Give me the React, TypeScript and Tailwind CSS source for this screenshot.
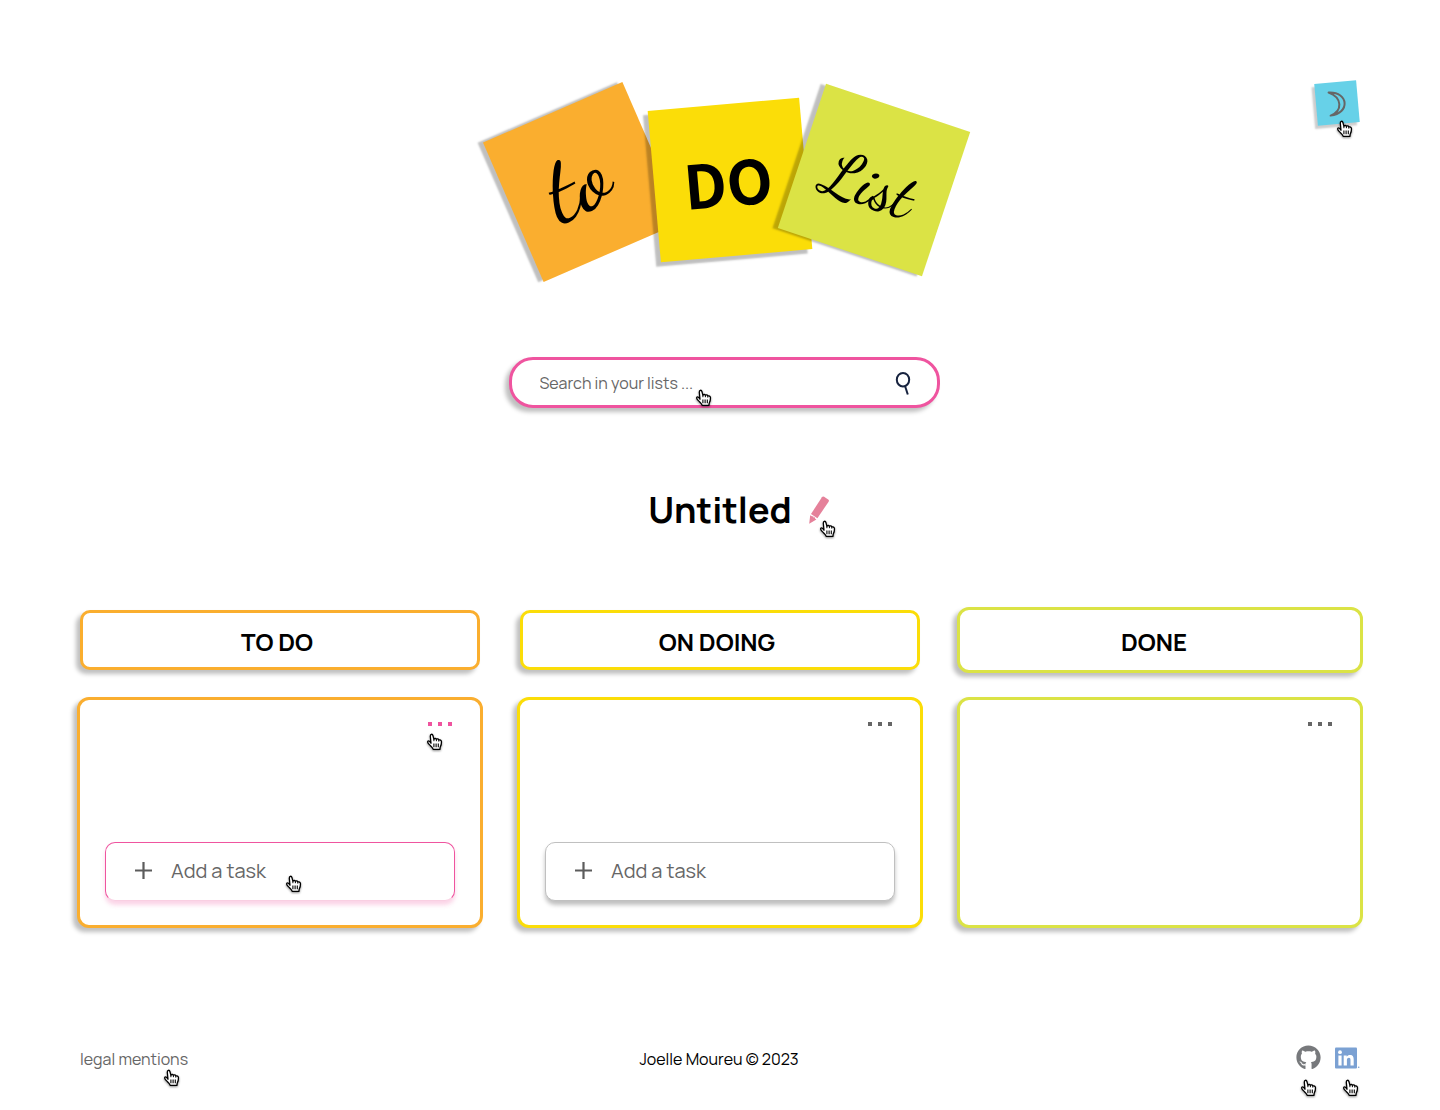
import React from "react";
import { FaGithub } from "react-icons/fa";

function Hand({ className }: { className: string }) {
  return (
    <svg
      aria-hidden="true"
      viewBox="0 0 17 18"
      className={`pointer-events-none absolute h-[18px] w-[17px] drop-shadow-[0_1px_1px_rgba(0,0,0,0.45)] ${className}`}
    >
      <path
        d="M5 10.2 4.3 3.2C4.2 1 6.4.6 6.9 2.5L7.9 6.2C8.6 5.2 10 5.3 10.4 6.3 11.2 5.6 12.5 5.9 12.8 7 14 6.4 15.4 7.3 15.5 8.7 15.6 11.2 15.2 12.2 14.2 14.2L13.9 16.3H7.2C6.7 14.6 5 13.3 3.6 11.9 2.3 10.6 1.2 9.3 1.8 8.3 2.7 7.3 4 8.6 5 10.2Z"
        fill="#fff"
        stroke="#000"
        strokeWidth="1.3"
        strokeLinejoin="round"
      />
      <path d="M7.9 10.6V14.2M10.1 10.6V14.2M12.3 10.6V14.2" stroke="#000" strokeWidth="1.1" />
      <path d="M7.9 6V8.2M10.4 6.4V8.2M12.8 7.2V8.6" stroke="#000" strokeWidth="1" />
    </svg>
  );
}

function Logo() {
  return (
    <h1 className="flex items-center pl-[17px] text-black" aria-label="to DO List">
      <span className="mt-1 flex size-[152px] rotate-[-23.5deg] items-center justify-center bg-[#faae2f] pr-3 pb-1.5 font-['Dancing_Script','Liberation_Serif',serif] text-[96px] leading-none font-medium shadow-[-5px_-2px_2px_rgba(0,0,0,0.25)]">
        to
      </span>
      <span className="-ml-[5px] flex size-[152px] -rotate-5 items-center justify-center bg-[#fbdd08] pr-1 font-['Noto_Sans_CJK_JP',Roboto,sans-serif] text-[60px] leading-none font-bold shadow-[-5px_4px_2px_rgba(0,0,0,0.25)]">
        DO
      </span>
      <span className="-ml-2 flex size-[152px] rotate-[18.5deg] items-center justify-center bg-[#dbe345] pt-3 pr-1.5 font-['Dancing_Script','Liberation_Serif',serif] text-[64px] leading-none font-medium shadow-[-5px_2px_2px_rgba(0,0,0,0.25)]">
        List
      </span>
    </h1>
  );
}

type ColumnProps = {
  title: string;
  border: string;
  large?: boolean;
  active?: boolean;
  task?: boolean;
};

function Column({ title, border, large, active, task }: ColumnProps) {
  return (
    <section className="flex flex-col gap-[30px]">
      <h3
        className={`flex items-center justify-center border-[3px] bg-white pt-1 text-2xl font-bold text-black shadow-[-4px_4px_4px_rgba(0,0,0,0.25)] ${border} ${
          large ? "-m-[3px] h-[66px] rounded-xl pr-3" : "h-[60px] rounded-[10px] pr-1.5"
        }`}
      >
        {title}
      </h3>
      <div className={`-m-[3px] flex h-[231px] flex-col justify-between rounded-xl border-[3px] bg-white px-[25px] pt-[25px] pb-6 shadow-[-4px_4px_4px_rgba(0,0,0,0.25)] ${border}`}>
        <div className="relative -mt-1 self-end">
          <button type="button" aria-label={`${title} options`} className={`flex gap-[6px] px-[3px] pt-px ${active ? "text-[#ef549f]" : "text-[#666]"}`}>
            <span className="size-1 bg-current" />
            <span className="size-1 bg-current" />
            <span className="size-1 bg-current" />
          </button>
          {active && <Hand className="top-3 left-px" />}
        </div>
        {task && (
          <button
            type="button"
            className={`relative flex h-[59px] items-center gap-[19px] rounded-[10px] border bg-white px-[29px] pb-0.5 text-left text-xl font-normal text-[#666] ${
              active
                ? "border-[#ef549f] border-b-[#f9cfe2] shadow-[0_4px_4px_rgba(239,84,159,0.25)]"
                : "border-[#c0c0c0] shadow-[0_4px_4px_rgba(0,0,0,0.25)]"
            }`}
          >
            <svg viewBox="0 0 17 17" className="size-[17px]" aria-hidden="true">
              <path d="M8.5 0V17M0 8.5H17" stroke="#5c5c5c" strokeWidth="2.2" />
            </svg>
            Add a task
            {active && <Hand className="top-8 left-[179px]" />}
          </button>
        )}
      </div>
    </section>
  );
}

export default function App() {
  return (
    <div className="min-h-screen bg-white px-20 pt-20 font-[Manrope,Inter,sans-serif]">
      <header className="grid grid-cols-[1fr_auto_1fr] items-start">
        <div />
        <div className="pt-[22px]">
          <Logo />
        </div>
        <div className="relative mt-[2px] mr-0.5 justify-self-end">
          <button
            type="button"
            aria-label="Dark mode"
            className="flex size-[42px] -rotate-5 items-center justify-center bg-[#67d1e8] pt-0.5 pr-0.5 shadow-[-3px_3px_2px_rgba(0,0,0,0.2)]"
          >
            <svg viewBox="0 0 20 26" className="h-[26px] w-5 rotate-5" fill="none" stroke="#666" strokeWidth="2" strokeLinejoin="round" aria-hidden="true">
              <path d="M2.5 1.5C23 .5 24 22.5 4.5 24.5 16.5 20 16.5 6.5 2.5 1.5Z" />
            </svg>
          </button>
          <Hand className="top-[38px] left-[20px]" />
        </div>
      </header>

      <main>
        <form role="search" className="relative mx-auto mt-[99px] w-[431px] translate-x-1" onSubmit={(e) => e.preventDefault()}>
          <input
            type="search"
            aria-label="Search in your lists"
            placeholder="Search in your lists ..."
            className="block h-[51px] w-full rounded-3xl border-[3px] border-[#ef549f] bg-white pr-14 pl-7 text-base font-normal text-[#666] shadow-[-4px_4px_4px_rgba(0,0,0,0.25)] outline-none placeholder:text-[#666]"
          />
          <button type="submit" aria-label="Search" className="absolute top-3.5 right-7">
            <svg viewBox="0 0 18 24" className="h-6 w-[18px]" fill="none" stroke="#17233f" strokeWidth="2" aria-hidden="true">
              <ellipse cx="9" cy="8.7" rx="6.2" ry="6.8" />
              <path d="M11.2 15.5 13.8 23.5" />
            </svg>
          </button>
          <Hand className="top-8 left-[186px]" />
        </form>

        <div className="mt-[77px] flex h-[50px] items-center justify-center gap-4 pl-[38px]">
          <h2 className="text-[36px] leading-[50px] font-bold text-black">Untitled</h2>
          <div className="relative">
            <button type="button" aria-label="Rename list" className="block">
              <svg viewBox="0 0 22 28" className="h-7 w-[22px]" fill="#e5819a" aria-hidden="true">
                <path d="M13.9 1.2Q14.8 0 16.1 .8L20.2 3.6Q21.4 4.5 20.6 5.7L9.4 22.2 3 18Z" />
                <path d="M2.2 19.2 4.3 20.6 5.1 20.1 5.5 21.6 6.8 21.3 7.2 22.8 8.4 23.4 1.2 27.8Z" />
              </svg>
            </button>
            <Hand className="top-6 left-[11px]" />
          </div>
        </div>

        <div className="mt-[75px] grid grid-cols-3 gap-10">
          <Column title="TO DO" border="border-[#faae2f]" active task />
          <Column title="ON DOING" border="border-[#fbdd08]" task />
          <Column title="DONE" border="border-[#dbe345]" large />
        </div>
      </main>

      <footer className="mt-[120px] grid grid-cols-[1fr_auto_1fr] items-center pb-9 text-base">
        <div className="relative justify-self-start">
          <a href="#legal" className="font-normal text-[#666]">legal mentions</a>
          <Hand className="top-[22px] left-[83px]" />
        </div>
        <p className="pr-0.5 text-black">Joelle Moureu © 2023</p>
        <div className="flex items-center gap-3.5 justify-self-end pb-0.5">
          <div className="relative">
            <a href="#github" aria-label="GitHub" className="block">
              <FaGithub className="size-[25px] text-[#77797c]" />
            </a>
            <Hand className="top-[34px] left-1" />
          </div>
          <div className="relative">
            <a href="#linkedin" aria-label="LinkedIn" className="block">
              <svg viewBox="0 0 25 22" className="h-[22px] w-[25px]" aria-hidden="true">
                <rect width="22" height="21" y="0.5" rx="1" fill="#7ba1d3" />
                <circle cx="5" cy="5.2" r="1.9" fill="#fff" />
                <path
                  d="M3.4 8.4H6.6V18.4H3.4ZM8.7 8.4H11.7V9.8C12.4 8.7 13.5 8.1 15 8.1 17.9 8.1 18.7 10 18.7 12.7V18.4H15.5V13.4C15.5 12 15.3 10.8 13.9 10.8 12.4 10.8 11.9 11.9 11.9 13.3V18.4H8.7Z"
                  fill="#fff"
                />
                <circle cx="23.7" cy="20.3" r="0.8" fill="#7ba1d3" />
              </svg>
            </a>
            <Hand className="top-8 left-[7px]" />
          </div>
        </div>
      </footer>
    </div>
  );
}
